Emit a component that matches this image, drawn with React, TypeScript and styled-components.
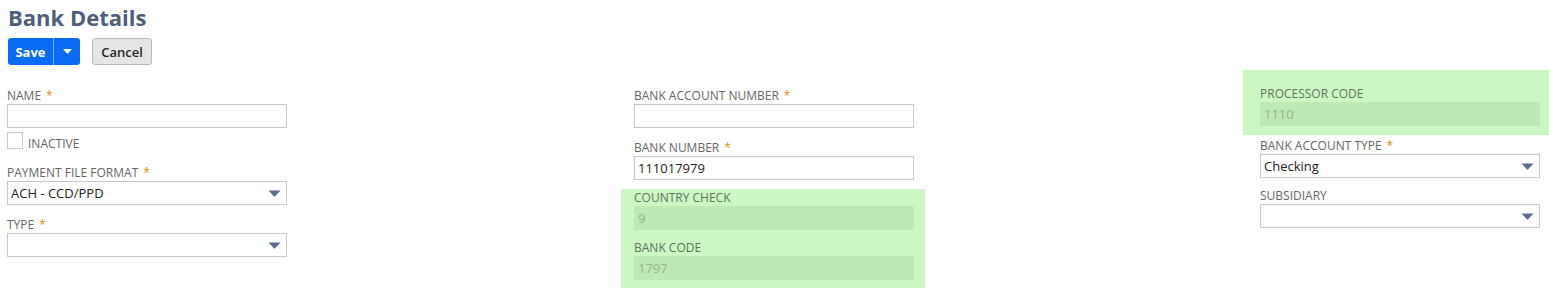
import React from "react";
import styled, { createGlobalStyle } from "styled-components";

const GlobalStyle = createGlobalStyle`
  body {
    margin: 0;
    background: #ffffff;
    font-family: "Open Sans", "Liberation Sans", sans-serif;
  }
`;

const Page = styled.div`
  width: 1549px;
  height: 289px;
  overflow: hidden;
  padding-left: 8px;
  box-sizing: border-box;
`;

const Title = styled.h1`
  margin: 0;
  padding-top: 2px;
  font-size: 22px;
  line-height: 30px;
  font-weight: 700;
  color: #4d5f7a;
`;

const Toolbar = styled.div`
  display: flex;
  align-items: center;
  gap: 12px;
  margin-top: 6px;
`;

const SaveGroup = styled.div`
  display: flex;
  height: 27px;
  border-radius: 3px;
  overflow: hidden;
  background: #0a6cf5;
`;

const SaveButton = styled.button`
  border: 0;
  background: transparent;
  color: #ffffff;
  font-family: inherit;
  font-weight: 700;
  font-size: 13px;
  width: 46px;
  padding: 0;
  border-right: 1px solid #7fb3fb;
`;

const ArrowButton = styled.button`
  border: 0;
  background: transparent;
  width: 26px;
  padding: 0;
  display: flex;
  align-items: center;
  justify-content: center;
`;

const CancelButton = styled.button`
  height: 27px;
  width: 60px;
  padding: 0;
  border: 1px solid #b9b9b9;
  border-radius: 3px;
  background: #e5e5e5;
  color: #262626;
  font-family: inherit;
  font-weight: 600;
  font-size: 13px;
`;

const Form = styled.div`
  display: grid;
  grid-template-columns: 627px 626px 1fr;
  margin-top: 5px;
  margin-left: -1px;
  align-items: start;
`;

const Column = styled.div<{ $top: number }>`
  display: flex;
  flex-direction: column;
  padding-top: ${(p) => p.$top}px;
  width: 280px;
`;

const Highlight = styled.div<{ $left: number; $right: number; $top: number; $bottom: number }>`
  background: #ccf7c5;
  margin: 0 -${(p) => p.$right}px 0 -${(p) => p.$left}px;
  padding: ${(p) => p.$top}px ${(p) => p.$right}px ${(p) => p.$bottom}px ${(p) => p.$left}px;
  display: flex;
  flex-direction: column;
`;

const Group = styled.div<{ $after?: number; $before?: number }>`
  display: flex;
  flex-direction: column;
  margin-top: ${(p) => p.$before ?? 0}px;
  margin-bottom: ${(p) => p.$after ?? 9}px;
`;

const Label = styled.label<{ $muted?: boolean }>`
  display: block;
  font-size: 12px;
  line-height: 17px;
  height: 17px;
  text-transform: uppercase;
  color: ${(p) => (p.$muted ? "#62735c" : "#666666")};
`;

const Required = styled.span`
  color: #d98e0b;
  margin-left: 5px;
`;

const Input = styled.div<{ $disabled?: boolean }>`
  height: 24px;
  box-sizing: border-box;
  border: 1px solid ${(p) => (p.$disabled ? "transparent" : "#c8c8c8")};
  background: ${(p) => (p.$disabled ? "#bee8b4" : "#ffffff")};
  color: ${(p) => (p.$disabled ? "#96b58e" : "#222222")};
  font-size: 13px;
  line-height: 22px;
  padding: 0 3px;
  display: flex;
  align-items: center;
  justify-content: space-between;
`;

const CheckRow = styled.div`
  display: flex;
  align-items: flex-end;
  gap: 5px;
  margin-top: 4px;
  margin-bottom: 15px;
`;

const CheckBox = styled.span`
  width: 16px;
  height: 17px;
  box-sizing: border-box;
  border: 1px solid #c8c8c8;
  background: #ffffff;
`;

const CheckText = styled.span`
  font-size: 12px;
  line-height: 12px;
  margin-bottom: -1px;
  color: #666666;
`;

const SelectCaret = styled.span`
  display: flex;
  margin-right: 2px;
`;

const Caret = () => (
  <svg width="13" height="7" viewBox="0 0 13 7">
    <path d="M0.5 0.5 H12.5 L7.2 6.2 Q6.5 6.9 5.8 6.2 Z" fill="#5a6e8c" />
  </svg>
);

const Select = ({ value }: { value?: string }) => (
  <Input>
    <span>{value ?? ""}</span>
    <SelectCaret>
      <Caret />
    </SelectCaret>
  </Input>
);

const Field = ({
  label,
  required,
  children,
  after,
  before,
  muted,
}: {
  label: string;
  required?: boolean;
  children: React.ReactNode;
  after?: number;
  before?: number;
  muted?: boolean;
}) => (
  <Group $after={after} $before={before}>
    <Label $muted={muted}>
      {label}
      {required && <Required>*</Required>}
    </Label>
    {children}
  </Group>
);

export default function App() {
  return (
    <Page>
      <GlobalStyle />
      <Title>Bank Details</Title>
      <Toolbar>
        <SaveGroup>
          <SaveButton>Save</SaveButton>
          <ArrowButton>
            <svg width="9" height="5" viewBox="0 0 9 5">
              <path d="M0 0 H9 L4.5 5 Z" fill="#ffffff" />
            </svg>
          </ArrowButton>
        </SaveGroup>
        <CancelButton>Cancel</CancelButton>
      </Toolbar>

      <Form>
        <Column $top={17}>
          <Field label="Name" required after={0}>
            <Input />
          </Field>
          <CheckRow>
            <CheckBox />
            <CheckText>INACTIVE</CheckText>
          </CheckRow>
          <Field label="Payment File Format" required after={11}>
            <Select value="ACH - CCD/PPD" />
          </Field>
          <Field label="Type" required>
            <Select />
          </Field>
        </Column>

        <Column $top={17}>
          <Field label="Bank Account Number" required after={11}>
            <Input />
          </Field>
          <Field label="Bank Number" required>
            <Input>111017979</Input>
          </Field>
          <Highlight $left={13} $right={11} $top={0} $bottom={8}>
            <Field label="Country Check" muted>
              <Input $disabled>9</Input>
            </Field>
            <Field label="Bank Code" muted after={0}>
              <Input $disabled>1797</Input>
            </Field>
          </Highlight>
        </Column>

        <Column $top={0}>
          <Highlight $left={17} $right={9} $top={15} $bottom={9}>
            <Field label="Processor Code" muted after={0}>
              <Input $disabled>1110</Input>
            </Field>
          </Highlight>
          <Field label="Bank Account Type" required before={2}>
            <Select value="Checking" />
          </Field>
          <Field label="Subsidiary">
            <Select />
          </Field>
        </Column>
      </Form>
    </Page>
  );
}
